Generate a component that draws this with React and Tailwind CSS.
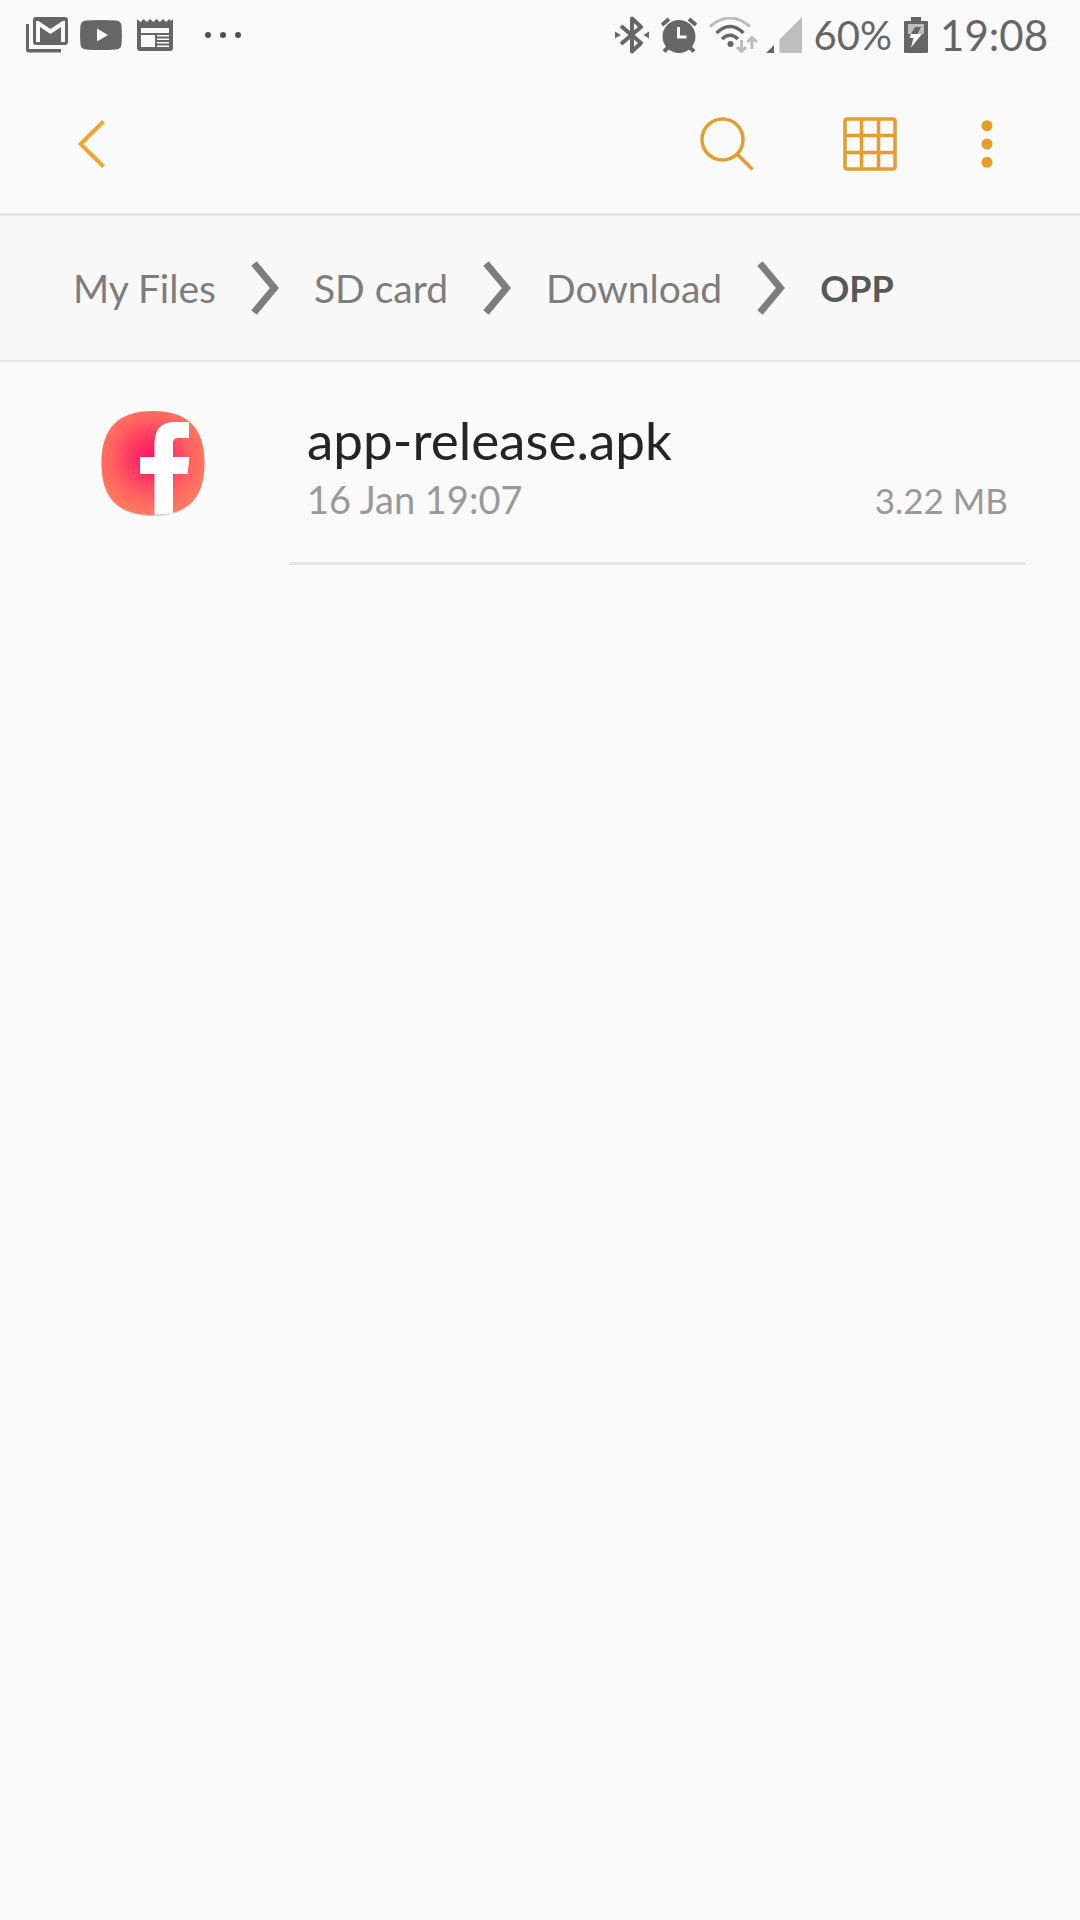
import React from "react";

function GmailIcon() {
  return (
    <svg viewBox="0 0 42 36" className="h-9 w-[42px]" fill="#666666" aria-hidden="true">
      <path d="M0 7h3v25h32v3.500H3a3 3 0 0 1-3-3z" />
      <path
        fillRule="evenodd"
        d="M10 0h29a3 3 0 0 1 3 3v22a3 3 0 0 1-3 3H10a3 3 0 0 1-3-3V3a3 3 0 0 1 3-3zM10 4v21h4V10l10.500 7L35 10v15h4V4h-2.500L24.500 12 12.500 4z"
      />
    </svg>
  );
}

function VideoIcon() {
  return (
    <svg viewBox="0 0 42 30" className="h-[30px] w-[42px]" aria-hidden="true">
      <path
        fill="#666666"
        d="M6 .6Q21-.6 36 .6q5 .4 5.500 5 .8 9.400 0 18.800-.5 4.600-5.500 5-15 1.200-30 0-5-.4-5.500-5-.8-9.400 0-18.800Q1 1 6 .6z"
      />
      <path fill="#fafafa" d="M17 8.500v13L28 15z" />
    </svg>
  );
}

function NewsIcon() {
  return (
    <svg viewBox="0 0 36 32" className="h-8 w-9" aria-hidden="true">
      <path
        fill="#666666"
        d="M0 0l3.600 3L6.500 0l3.300 3L13 0l3.300 3L19.500 0l3.300 3L26 0l3.300 3L32 0l2 2 2-2v29a3 3 0 0 1-3 3H3a3 3 0 0 1-3-3z"
      />
      <path fill="#fafafa" d="M4 9h28v5H4zM4 16h14v12H4zM20 16h12v1.500H20zM20 19.500h12V21H20zM20 23h12v1.500H20zM20 26.500h12V28H20z" />
    </svg>
  );
}

function BluetoothIcon() {
  return (
    <svg viewBox="0 0 34 38" className="h-[38px] w-[34px]" aria-hidden="true">
      <path d="M6 10l20 17-9 8.500V2.500L26 11 6 28" fill="none" stroke="#666666" strokeWidth="4" strokeLinejoin="round" />
      <path fill="#666666" d="M0 15.500l6 3.500-6 3.500zM34 15.500L28.500 19l5.500 3.500z" />
    </svg>
  );
}

function AlarmIcon() {
  return (
    <svg viewBox="0 0 36 36" className="size-9" aria-hidden="true">
      <circle cx="18" cy="19.500" r="16.500" fill="#666666" />
      <path d="M1 8l7-6M35 8l-7-6M3 34.500l5-5M33 34.500l-5-5" stroke="#666666" strokeWidth="4" />
      <path d="M17.500 10v10h8" fill="none" stroke="#fafafa" strokeWidth="3" />
    </svg>
  );
}

function WifiIcon() {
  return (
    <svg viewBox="0 0 49 36" className="h-9 w-[49px]" fill="none" aria-hidden="true">
      <path d="M1 9.500Q21-7.500 41 9.500" stroke="#bebebe" strokeWidth="3" />
      <path d="M7.500 16Q21 3 34.500 16M13 22q8-7.500 16 0" stroke="#666666" strokeWidth="3.500" />
      <circle cx="21.500" cy="27" r="3" fill="#666666" />
      <path d="M32.500 23v11M28 30l4.500 4.500L37 30M43 32V21M38.500 25l4.500-4.500 5 4.500" stroke="#bebebe" strokeWidth="3" />
    </svg>
  );
}

function SignalIcon() {
  return (
    <svg viewBox="0 0 36 36" className="size-9" aria-hidden="true">
      <path fill="#666666" d="M0 36l8-8v8z" />
      <path fill="#bebebe" d="M13.500 36V22.500L36 0v36z" />
    </svg>
  );
}

function BatteryIcon() {
  return (
    <svg viewBox="0 0 24 36" className="h-9 w-6" aria-hidden="true">
      <path fill="#666666" d="M7 0h10v4h6a1 1 0 0 1 1 1v30a1 1 0 0 1-1 1H1a1 1 0 0 1-1-1V5a1 1 0 0 1 1-1h6z" />
      <path fill="#bebebe" d="M4 7h16v10H4z" />
      <path fill="#666666" d="M11 10h6l-3.500 7H7z" />
      <path fill="#fff" d="M7 17h11L7 30.500 9.500 21H5.500z" />
    </svg>
  );
}

function StatusBar() {
  return (
    <div className="flex h-[70px] items-center justify-between pr-8 pl-[26px] text-[40px] leading-[48px] text-[#666666]">
      <div className="flex items-center">
        <GmailIcon />
        <span className="ml-3"><VideoIcon /></span>
        <span className="ml-[15px]"><NewsIcon /></span>
        <span className="ml-8 flex gap-[9px]">
          <i className="size-1.5 rounded-full bg-[#505050]" />
          <i className="size-1.5 rounded-full bg-[#505050]" />
          <i className="size-1.5 rounded-full bg-[#505050]" />
        </span>
      </div>
      <div className="flex items-center">
        <BluetoothIcon />
        <span className="ml-3"><AlarmIcon /></span>
        <span className="ml-3"><WifiIcon /></span>
        <span className="ml-2"><SignalIcon /></span>
        <span className="ml-3">60%</span>
        <span className="ml-3"><BatteryIcon /></span>
        <span className="ml-3 text-[42px]">19:08</span>
      </div>
    </div>
  );
}

function Toolbar() {
  return (
    <header className="flex h-[146px] items-center justify-between border-b-3 border-[#e6e6e6] pt-1 pr-[72px] pl-[60px]">
      <button type="button" aria-label="Back" className="flex size-[60px] items-center justify-start pl-[18px]">
        <svg viewBox="0 0 28 48" className="h-12 w-7" fill="none">
          <path d="M25.500 1.500L2.500 24l23 22.500" stroke="#efa62f" strokeWidth="4" />
        </svg>
      </button>
      <div className="flex items-center">
        <button type="button" aria-label="Search">
          <svg viewBox="0 0 54 54" className="size-[54px]" fill="none" stroke="#e39f2d" strokeWidth="3.500">
            <circle cx="22.500" cy="22.500" r="20.500" />
            <path d="M37 37l15.500 15.500" />
          </svg>
        </button>
        <button type="button" aria-label="Grid view" className="ml-[89px]">
          <svg viewBox="0 0 54 54" className="size-[54px]" fill="none" stroke="#e39f2d" strokeWidth="3.500">
            <rect x="2" y="2" width="50" height="50" rx="2" />
            <path d="M18.500 2v50M35.500 2v50M2 18.500h50M2 35.500h50" />
          </svg>
        </button>
        <button type="button" aria-label="More options" className="ml-[69px] flex w-[42px] justify-center">
          <svg viewBox="0 0 12 48" className="h-12 w-3" fill="#e79d26">
            <circle cx="6" cy="5.700" r="5.500" />
            <circle cx="6" cy="24" r="5.500" />
            <circle cx="6" cy="42.300" r="5.500" />
          </svg>
        </button>
      </div>
    </header>
  );
}

function Chevron() {
  return (
    <svg viewBox="0 0 28 54" className="h-[54px] w-7 shrink-0" fill="none" aria-hidden="true">
      <path d="M3 2.500L23.500 27 3 51.500" stroke="#7d7d7d" strokeWidth="7" />
    </svg>
  );
}

function Breadcrumbs() {
  return (
    <nav aria-label="Path" className="h-[146px] border-b-2 border-[#e6e6e6] bg-[#f8f8f8] px-[73px]">
      <ol className="flex h-full items-center text-[39px] leading-[48px] text-[#7d7d7d]">
        {["My Files", "SD card", "Download"].map((name) => (
          <li key={name} className="flex items-center gap-[35px] pr-[35px]">
            <a href="#" className="whitespace-nowrap">{name}</a>
            <Chevron />
          </li>
        ))}
        <li aria-current="page" className="text-[36px] font-bold text-[#585858]">OPP</li>
      </ol>
    </nav>
  );
}

function AppIcon() {
  return (
    <svg viewBox="0 0 106 108" className="h-[108px] w-[106px] shrink-0" aria-hidden="true">
      <defs>
        <radialGradient id="glow" gradientUnits="userSpaceOnUse" cx="51" cy="48" r="66">
          <stop offset="0" stopColor="#ff1464" />
          <stop offset=".25" stopColor="#ff2f62" />
          <stop offset=".6" stopColor="#ff6260" />
          <stop offset="1" stopColor="#ff8560" />
        </radialGradient>
      </defs>
      <path d="M53 2C88 2 104.500 19 104.500 54S88 106 53 106 1.500 89 1.500 54 18 2 53 2z" fill="#d2cdcd" />
      <path d="M53 1C88 1 104.500 18 104.500 53S88 105 53 105 1.500 88 1.500 53 18 1 53 1z" fill="url(#glow)" />
      <path d="M54.500 105V64H40V47h14.500V34q0-22 20-22H89v16H78q-5 0-5 5v14h16.500l-2 17H73v39.500z" fill="#fff" />
    </svg>
  );
}

function FileRow() {
  return (
    <li className="flex">
      <div className="flex w-[289px] shrink-0 pt-12 pl-[100px]">
        <AppIcon />
      </div>
      <div className="mr-[54px] h-[203px] flex-1 border-b-3 border-[#e6e6e6] px-[18px] pt-[46px]">
        <h2 className="text-[53px] leading-[64px] text-[#252525]">app-release.apk</h2>
        <div className="flex items-baseline justify-between leading-[54px] text-[#999999]">
          <span className="text-[38px]">16 Jan 19:07</span>
          <span className="text-[35px]">3.22 MB</span>
        </div>
      </div>
    </li>
  );
}

export default function App() {
  return (
    <div className="min-h-screen bg-[#fafafa] font-['Lato',sans-serif]">
      <StatusBar />
      <Toolbar />
      <Breadcrumbs />
      <main>
        <ul>
          <FileRow />
        </ul>
      </main>
    </div>
  );
}
